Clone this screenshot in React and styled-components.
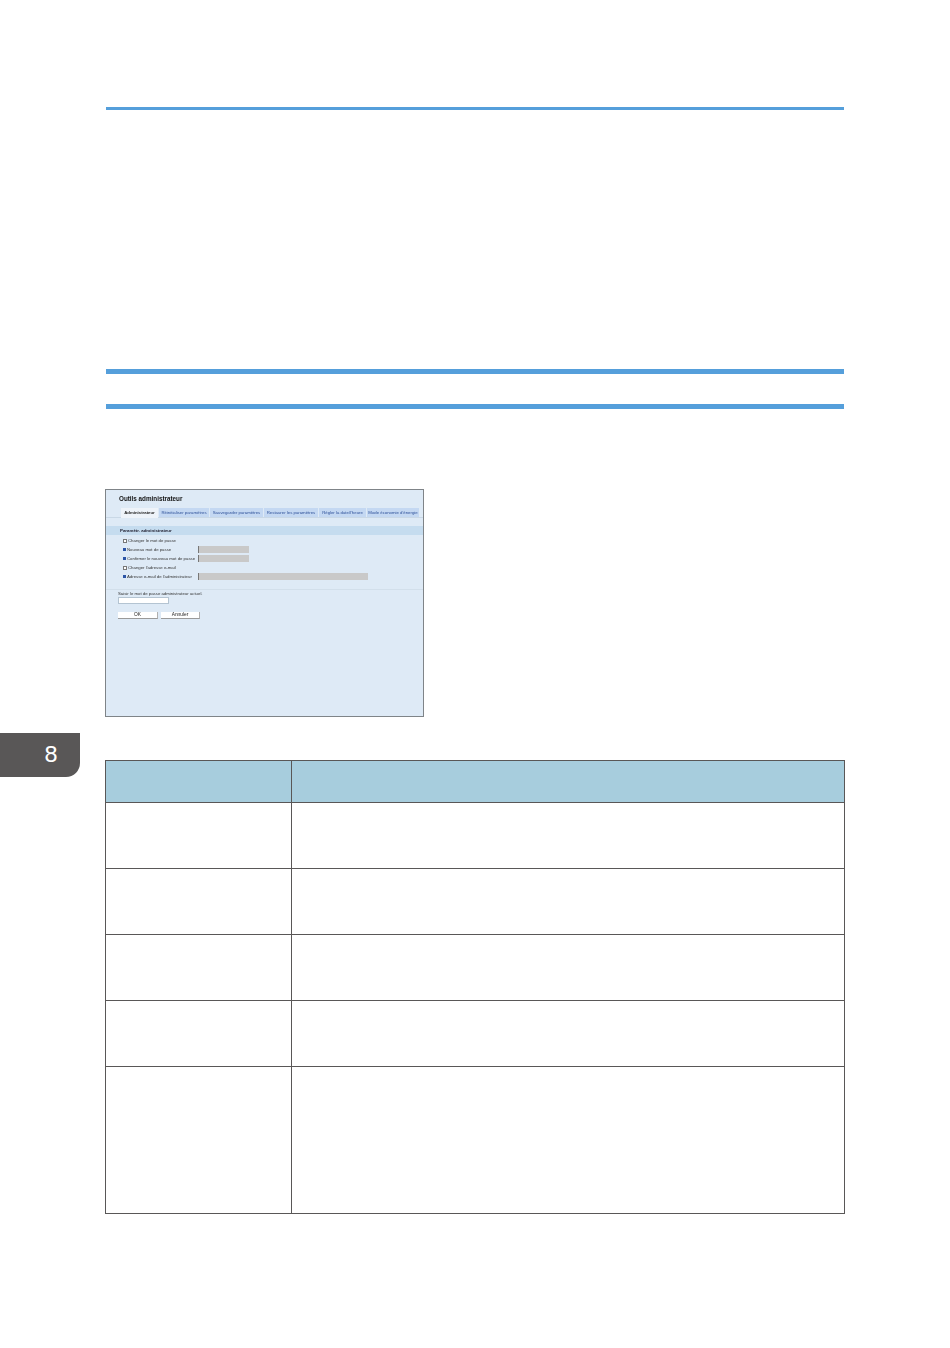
import React from "react";
import styled, { createGlobalStyle } from "styled-components";

const Global = createGlobalStyle`
  html, body { margin: 0; padding: 0; background: #fff; }
  body { font-family: "Liberation Sans", Arial, sans-serif; }
`;

const Page = styled.div`
  display: grid;
  grid-template-columns: 105px 740px;
  width: 950px;
  height: 1348px;
  overflow: hidden;
`;

const Side = styled.aside`
  padding-top: 733px;
`;

const ChapterTab = styled.div`
  width: 80px;
  height: 44px;
  box-sizing: border-box;
  padding-right: 22px;
  background: #595757;
  border-bottom-right-radius: 14px;
  color: #fff;
  font: 22px/44px "DejaVu Sans", sans-serif;
  text-align: right;
`;

const Main = styled.main`
  display: flex;
  flex-direction: column;
  padding-top: 107px;
`;

const Rule = styled.div`
  height: ${(p) => p.$h}px;
  margin: ${(p) => p.$top}px 1px 0 1px;
  background: #559fdb;
`;

const Shot = styled.section`
  width: 319px;
  height: 228px;
  box-sizing: border-box;
  margin-top: 80px;
  padding-top: 4px;
  background: #deeaf6;
  border: 1px solid #7f8488;
  overflow: hidden;
  color: #333;
  font-size: 4.3px;
  line-height: 9px;
  filter: blur(0.3px);
`;

const ShotTitle = styled.h1`
  margin: 0 0 0 13px;
  font-size: 6.3px;
  line-height: 9px;
  font-weight: bold;
  color: #111;
`;

const Tabs = styled.div`
  display: flex;
  gap: 1px;
  height: 9px;
  margin-top: 5px;
  padding-left: 15px;
  border-bottom: 1px solid #c9d8e6;
`;

const TabItem = styled.div`
  flex: 0 0 ${(p) => p.$w}px;
  box-sizing: border-box;
  height: ${(p) => (p.$active ? 10 : 9)}px;
  text-align: center;
  white-space: nowrap;
  background: ${(p) => (p.$active ? "#eef3f9" : "#c4d8f2")};
  color: ${(p) => (p.$active ? "#222" : "#2c4f98")};
  font-weight: ${(p) => (p.$active ? "bold" : "normal")};
`;

const SectionHead = styled.h2`
  margin: 8px 0 0;
  height: 9px;
  padding-left: 14px;
  background: #c5dcef;
  font-size: 4.4px;
  line-height: 9px;
  font-weight: bold;
  color: #223;
`;

const Fields = styled.div`
  display: flex;
  flex-direction: column;
  margin-top: 1px;
  padding-left: 17px;
`;

const FieldRow = styled.div`
  display: flex;
  align-items: center;
  height: 9px;
  white-space: nowrap;
`;

const Check = styled.span`
  width: 4px;
  height: 4px;
  box-sizing: border-box;
  margin-right: 1px;
  background: #fff;
  border: 0.5px solid #777;
`;

const Bullet = styled.span`
  width: 3px;
  height: 3px;
  margin-right: 1px;
  background: #2b54a6;
`;

const Label = styled.span`
  width: 71px;
`;

const Input = styled.span`
  width: ${(p) => p.$w}px;
  height: 7px;
  box-sizing: border-box;
  background: #c9c9c9;
  border-left: 1px solid #777;
`;

const Divider = styled.div`
  margin-top: 8px;
  border-top: 1px solid #d2dfeb;
`;

const Confirm = styled.div`
  display: flex;
  flex-direction: column;
  padding-left: 12px;
`;

const ConfirmText = styled.span`
  line-height: 7px;
`;

const PwBox = styled.span`
  width: 51px;
  height: 7px;
  background: #fff;
  border: 0.5px solid #b4c4d2;
  box-sizing: border-box;
`;

const Buttons = styled.div`
  display: flex;
  gap: 3px;
  margin-top: 8px;
`;

const Btn = styled.div`
  width: ${(p) => p.$w}px;
  height: 7px;
  box-sizing: border-box;
  background: #fff;
  border-bottom: 1px solid #9a9a9a;
  border-right: 1px solid #b0b0b0;
  color: #222;
  font-size: 4.8px;
  line-height: 6px;
  text-align: center;
`;

const Table = styled.table`
  width: 740px;
  margin-top: 43px;
  border-collapse: collapse;
  table-layout: fixed;
`;

const HeadCell = styled.th`
  height: 41px;
  padding: 0;
  background: #a7cddd;
  border: 1px solid #595757;
`;

const Cell = styled.td`
  height: ${(p) => p.$h}px;
  padding: 0;
  border: 1px solid #595757;
`;

const tabs = [
  ["Administrateur", 37, true],
  ["Réinitialiser paramètres", 50],
  ["Sauvegarder paramètres", 53],
  ["Restaurer les paramètres", 54],
  ["Régler la date/l'heure", 47],
  ["Mode économie d'énergie", 52],
];

const rows = [65, 65, 65, 65, 146];

export default function App() {
  return (
    <>
      <Global />
      <Page>
        <Side>
          <ChapterTab>8</ChapterTab>
        </Side>
        <Main>
          <Rule $h={3} $top={0} />
          <Rule $h={5} $top={259} />
          <Rule $h={5} $top={30} />
          <Shot>
            <ShotTitle>Outils administrateur</ShotTitle>
            <Tabs>
              {tabs.map(([t, w, a]) => (
                <TabItem key={t} $w={w} $active={a}>{t}</TabItem>
              ))}
            </Tabs>
            <SectionHead>Paramètr. administrateur</SectionHead>
            <Fields>
              <FieldRow><Check />Changer le mot de passe</FieldRow>
              <FieldRow><Bullet /><Label>Nouveau mot de passe</Label><Input $w={51} /></FieldRow>
              <FieldRow><Bullet /><Label>Confirmer le nouveau mot de passe</Label><Input $w={51} /></FieldRow>
              <FieldRow><Check />Changer l'adresse e-mail</FieldRow>
              <FieldRow><Bullet /><Label>Adresse e-mail de l'administrateur</Label><Input $w={170} /></FieldRow>
            </Fields>
            <Divider />
            <Confirm>
              <ConfirmText>Saisir le mot de passe administrateur actuel.</ConfirmText>
              <PwBox />
              <Buttons>
                <Btn $w={40}>OK</Btn>
                <Btn $w={39}>Annuler</Btn>
              </Buttons>
            </Confirm>
          </Shot>
          <Table>
            <colgroup>
              <col style={{ width: 186 }} />
              <col />
            </colgroup>
            <thead>
              <tr>
                <HeadCell />
                <HeadCell />
              </tr>
            </thead>
            <tbody>
              {rows.map((h, i) => (
                <tr key={i}>
                  <Cell $h={h} />
                  <Cell $h={h} />
                </tr>
              ))}
            </tbody>
          </Table>
        </Main>
      </Page>
    </>
  );
}
